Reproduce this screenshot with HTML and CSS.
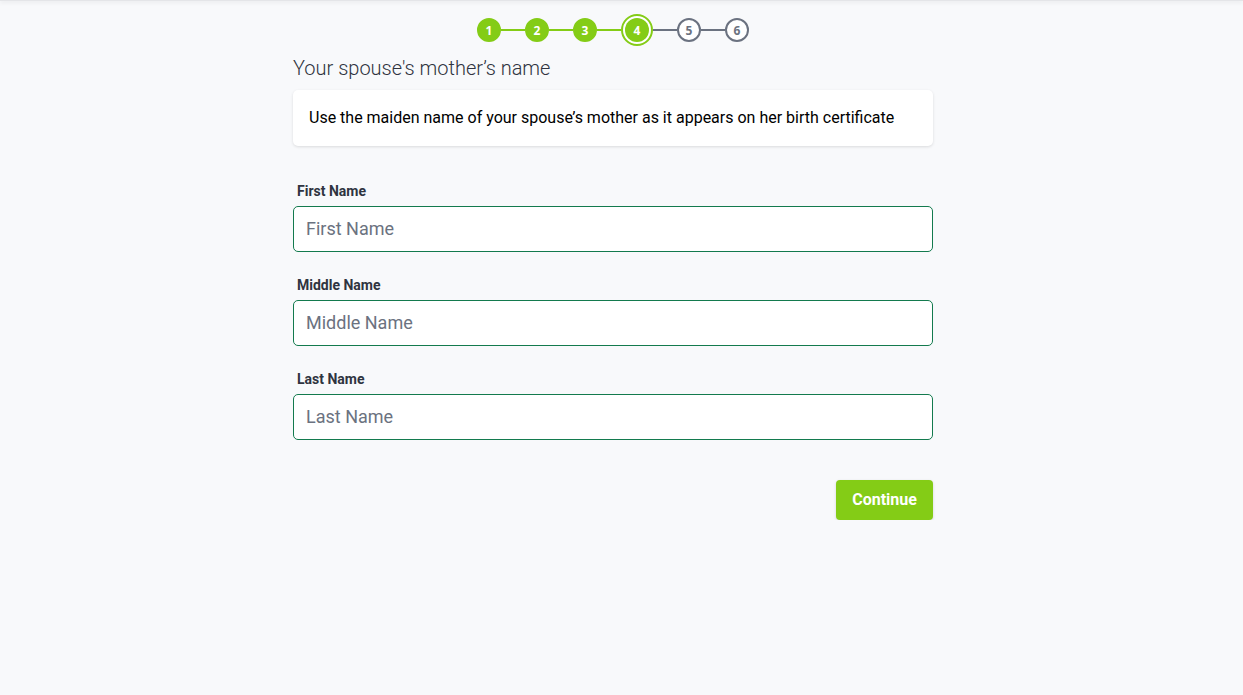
FILE: index.html
```html
<!DOCTYPE html>
<html>
	<head>
		<meta charset="UTF-8">
		<title>Your spouse's mother's name</title>
		<link rel="stylesheet" href="styles.css">
	</head>
	<body>
		<div class="topbar"></div>
		<div class="page">
			<div class="wrap">
				<ol class="steps">
					<li class="step done">1</li>
					<li class="line done"></li>
					<li class="step done">2</li>
					<li class="line done"></li>
					<li class="step done">3</li>
					<li class="line done"></li>
					<li class="step current"><span>4</span></li>
					<li class="line"></li>
					<li class="step">5</li>
					<li class="line"></li>
					<li class="step">6</li>
				</ol>

				<h1 class="title">Your spouse's mother’s name</h1>
				<div class="hint">Use the maiden name of your spouse’s mother as it appears on her birth certificate</div>

				<form class="form">
					<div class="field">
						<label for="first">First Name</label>
						<input id="first" type="text" placeholder="First Name">
					</div>
					<div class="field">
						<label for="middle">Middle Name</label>
						<input id="middle" type="text" placeholder="Middle Name">
					</div>
					<div class="field">
						<label for="last">Last Name</label>
						<input id="last" type="text" placeholder="Last Name">
					</div>
					<div class="actions">
						<button type="button" class="btn">Continue</button>
					</div>
				</form>
			</div>
		</div>
	</body>
</html>
```

FILE: styles.css
```css
*{
	margin: 0;
	padding: 0;
	box-sizing: border-box;
}
body{
	background: #f8f9fb;
	font-family: Roboto, "Liberation Sans", sans-serif;
	color: #111;
}
.topbar{
	height: 1px;
	background: #e4e5e8;
	box-shadow: 0 1px 4px rgba(0,0,0,.18);
}
.page{
	padding-right: 17px;
}
.wrap{
	width: 640px;
	margin: 0 auto;
}

/* stepper */
.steps{
	list-style: none;
	display: flex;
	align-items: center;
	justify-content: center;
	height: 32px;
	margin-top: 13px;
}
.step{
	width: 24px;
	height: 24px;
	border-radius: 50%;
	border: 2px solid #6b7280;
	color: #6b7280;
	background: #fff;
	font-family: "Open Sans", sans-serif;
	font-weight: 700;
	font-size: 12px;
	display: flex;
	align-items: center;
	justify-content: center;
}
.step.done{
	background: #84cc16;
	border-color: #84cc16;
	color: #fff;
}
.step.current{
	width: 32px;
	height: 32px;
	border-color: #84cc16;
	background: #fff;
	padding: 2px;
}
.step.current span{
	width: 100%;
	height: 100%;
	border-radius: 50%;
	background: #84cc16;
	color: #fff;
	display: flex;
	align-items: center;
	justify-content: center;
}
.line{
	width: 24px;
	height: 2px;
	background: #6b7280;
}
.line.done{
	background: #84cc16;
}

.title{
	font-size: 20px;
	font-weight: 300;
	line-height: 24px;
	color: #2f3440;
	margin-top: 10px;
}
.hint{
	margin-top: 10px;
	background: #fff;
	border-radius: 5px;
	box-shadow: 0 1px 3px rgba(0,0,0,.12);
	padding: 16px;
	font-size: 16px;
	line-height: 24px;
	color: #000;
}

/* form */
.form{
	margin-top: 35px;
}
.field{
	margin-bottom: 23px;
}
.field label{
	display: block;
	padding-left: 4px;
	font-size: 14px;
	font-weight: 700;
	line-height: 20px;
	color: #2f3440;
	margin-bottom: 5px;
}
.field input{
	display: block;
	width: 100%;
	height: 46px;
	border: 1px solid #137a4e;
	border-radius: 5px;
	background: #fff;
	padding: 0 12px 2px;
	font-family: Roboto, "Liberation Sans", sans-serif;
	font-size: 18px;
	color: #111;
	outline: none;
}
.field input::placeholder{
	color: #6b7280;
}
.actions{
	display: flex;
	justify-content: flex-end;
	margin-top: 40px;
}
.btn{
	width: 97px;
	height: 40px;
	border: none;
	border-radius: 4px;
	background: #84cc16;
	color: #fff;
	padding-bottom: 2px;
	font-family: Roboto, "Liberation Sans", sans-serif;
	font-size: 16px;
	font-weight: 700;
	box-shadow: 0 1px 3px rgba(0,0,0,.15);
	cursor: pointer;
}
```
